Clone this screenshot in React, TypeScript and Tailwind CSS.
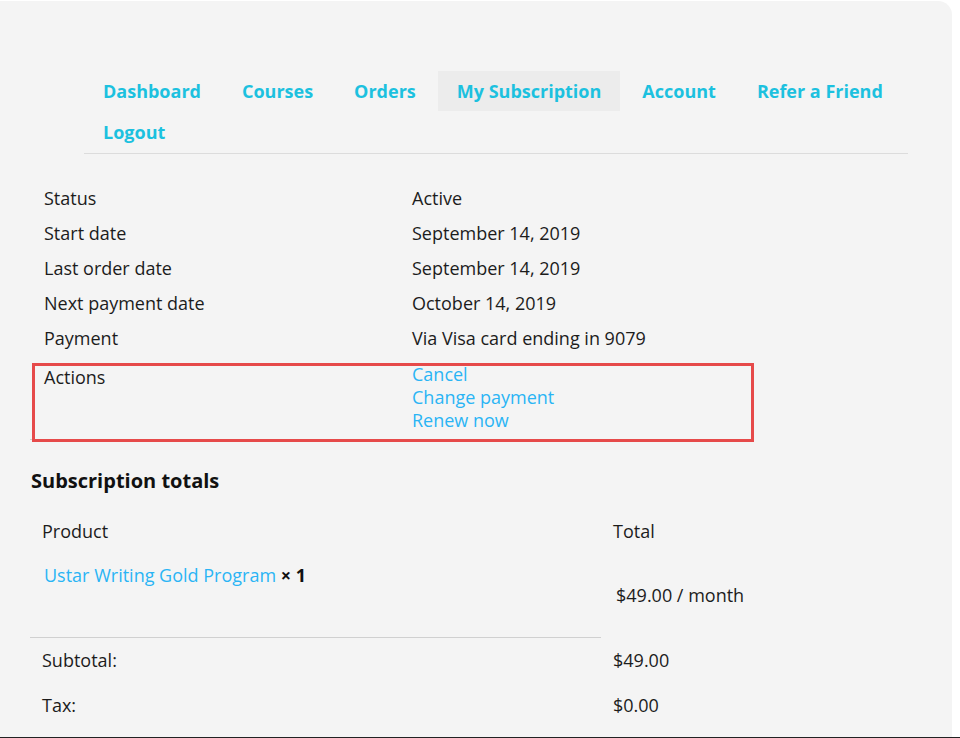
import React from "react";

const navItems = [
  { label: "Dashboard" },
  { label: "Courses" },
  { label: "Orders" },
  { label: "My Subscription", active: true },
  { label: "Account" },
  { label: "Refer a Friend" },
  { label: "Logout" },
];

const details = [
  { label: "Status", value: "Active" },
  { label: "Start date", value: "September 14, 2019" },
  { label: "Last order date", value: "September 14, 2019" },
  { label: "Next payment date", value: "October 14, 2019" },
  { label: "Payment", value: "Via Visa card ending in 9079" },
];

export default function App() {
  return (
    <div className="w-[960px] h-[738px] bg-white flex flex-col overflow-hidden font-['Open_Sans',sans-serif] text-[18px] text-[#1c1c1c]">
      <div className="flex-1 w-[952px] mt-[1px] bg-[#f4f4f4] rounded-tr-[14px] pt-[70px]">
        {/* account nav */}
        <nav className="ml-[84px] w-[824px] border-b border-[#dcdcdc]">
          <ul className="flex flex-wrap gap-x-[3px] gap-y-[1px] pb-[1px]">
            {navItems.map((item) => (
              <li key={item.label}>
                <a
                  href="#"
                  className={`h-[40px] px-[19px] flex items-center font-bold text-[#1cc1df] leading-none ${item.active ? "bg-[#ececec]" : ""}`}
                >
                  {item.label}
                </a>
              </li>
            ))}
          </ul>
        </nav>

        {/* subscription details */}
        <div className="ml-[31px] mt-[27px] w-[722px]">
          {details.map((row) => (
            <div key={row.label} className="flex h-[35px] items-center leading-[27px]">
              <div className="w-[369px] pl-[13px]">{row.label}</div>
              <div className="pl-[12px]">{row.value}</div>
            </div>
          ))}
          <div className="relative flex">
            <div className="w-[370px] -ml-[1px] pl-[14px] pt-[8px] leading-[27px] border-b border-[#cfcfcf]">Actions</div>
            <div className="flex flex-col pl-[12px] pt-[7px] pb-[8px] leading-[23px] text-[#2ab4f4]">
              <a href="#">Cancel</a>
              <a href="#">Change payment</a>
              <a href="#">Renew now</a>
            </div>
            <div className="absolute left-[1px] top-[7px] w-[722px] h-[79px] border-[3px] border-[#e64a4a] pointer-events-none" />
          </div>
        </div>

        {/* totals */}
        <h2 className="ml-[31px] mt-[27px] text-[20px] font-bold leading-[28px] text-[#111]">Subscription totals</h2>
        <div className="ml-[30px] mt-[13px] w-[740px]">
          <div className="flex h-[46px] items-center">
            <div className="w-[571px] pl-[12px]">Product</div>
            <div className="pl-[12px]">Total</div>
          </div>
          <div className="flex h-[84px]">
            <div className="w-[571px] pl-[14px] pt-[8px] leading-[27px] border-b border-[#d0d0d0]">
              <a href="#" className="text-[#2ab4f4]">Ustar Writing Gold Program</a>{" "}
              <strong className="font-bold text-[#111]">× 1</strong>
            </div>
            <div className="pl-[15px] flex items-center pb-[1px]">$49.00 / month</div>
          </div>
          <div className="flex h-[44px] items-center">
            <div className="w-[571px] pl-[12px]">Subtotal:</div>
            <div className="pl-[12px]">$49.00</div>
          </div>
          <div className="flex h-[44px] items-center pt-[2px]">
            <div className="w-[571px] pl-[12px]">Tax:</div>
            <div className="pl-[12px]">$0.00</div>
          </div>
        </div>
      </div>
      <div className="h-[1px] bg-[#222]" />
    </div>
  );
}
